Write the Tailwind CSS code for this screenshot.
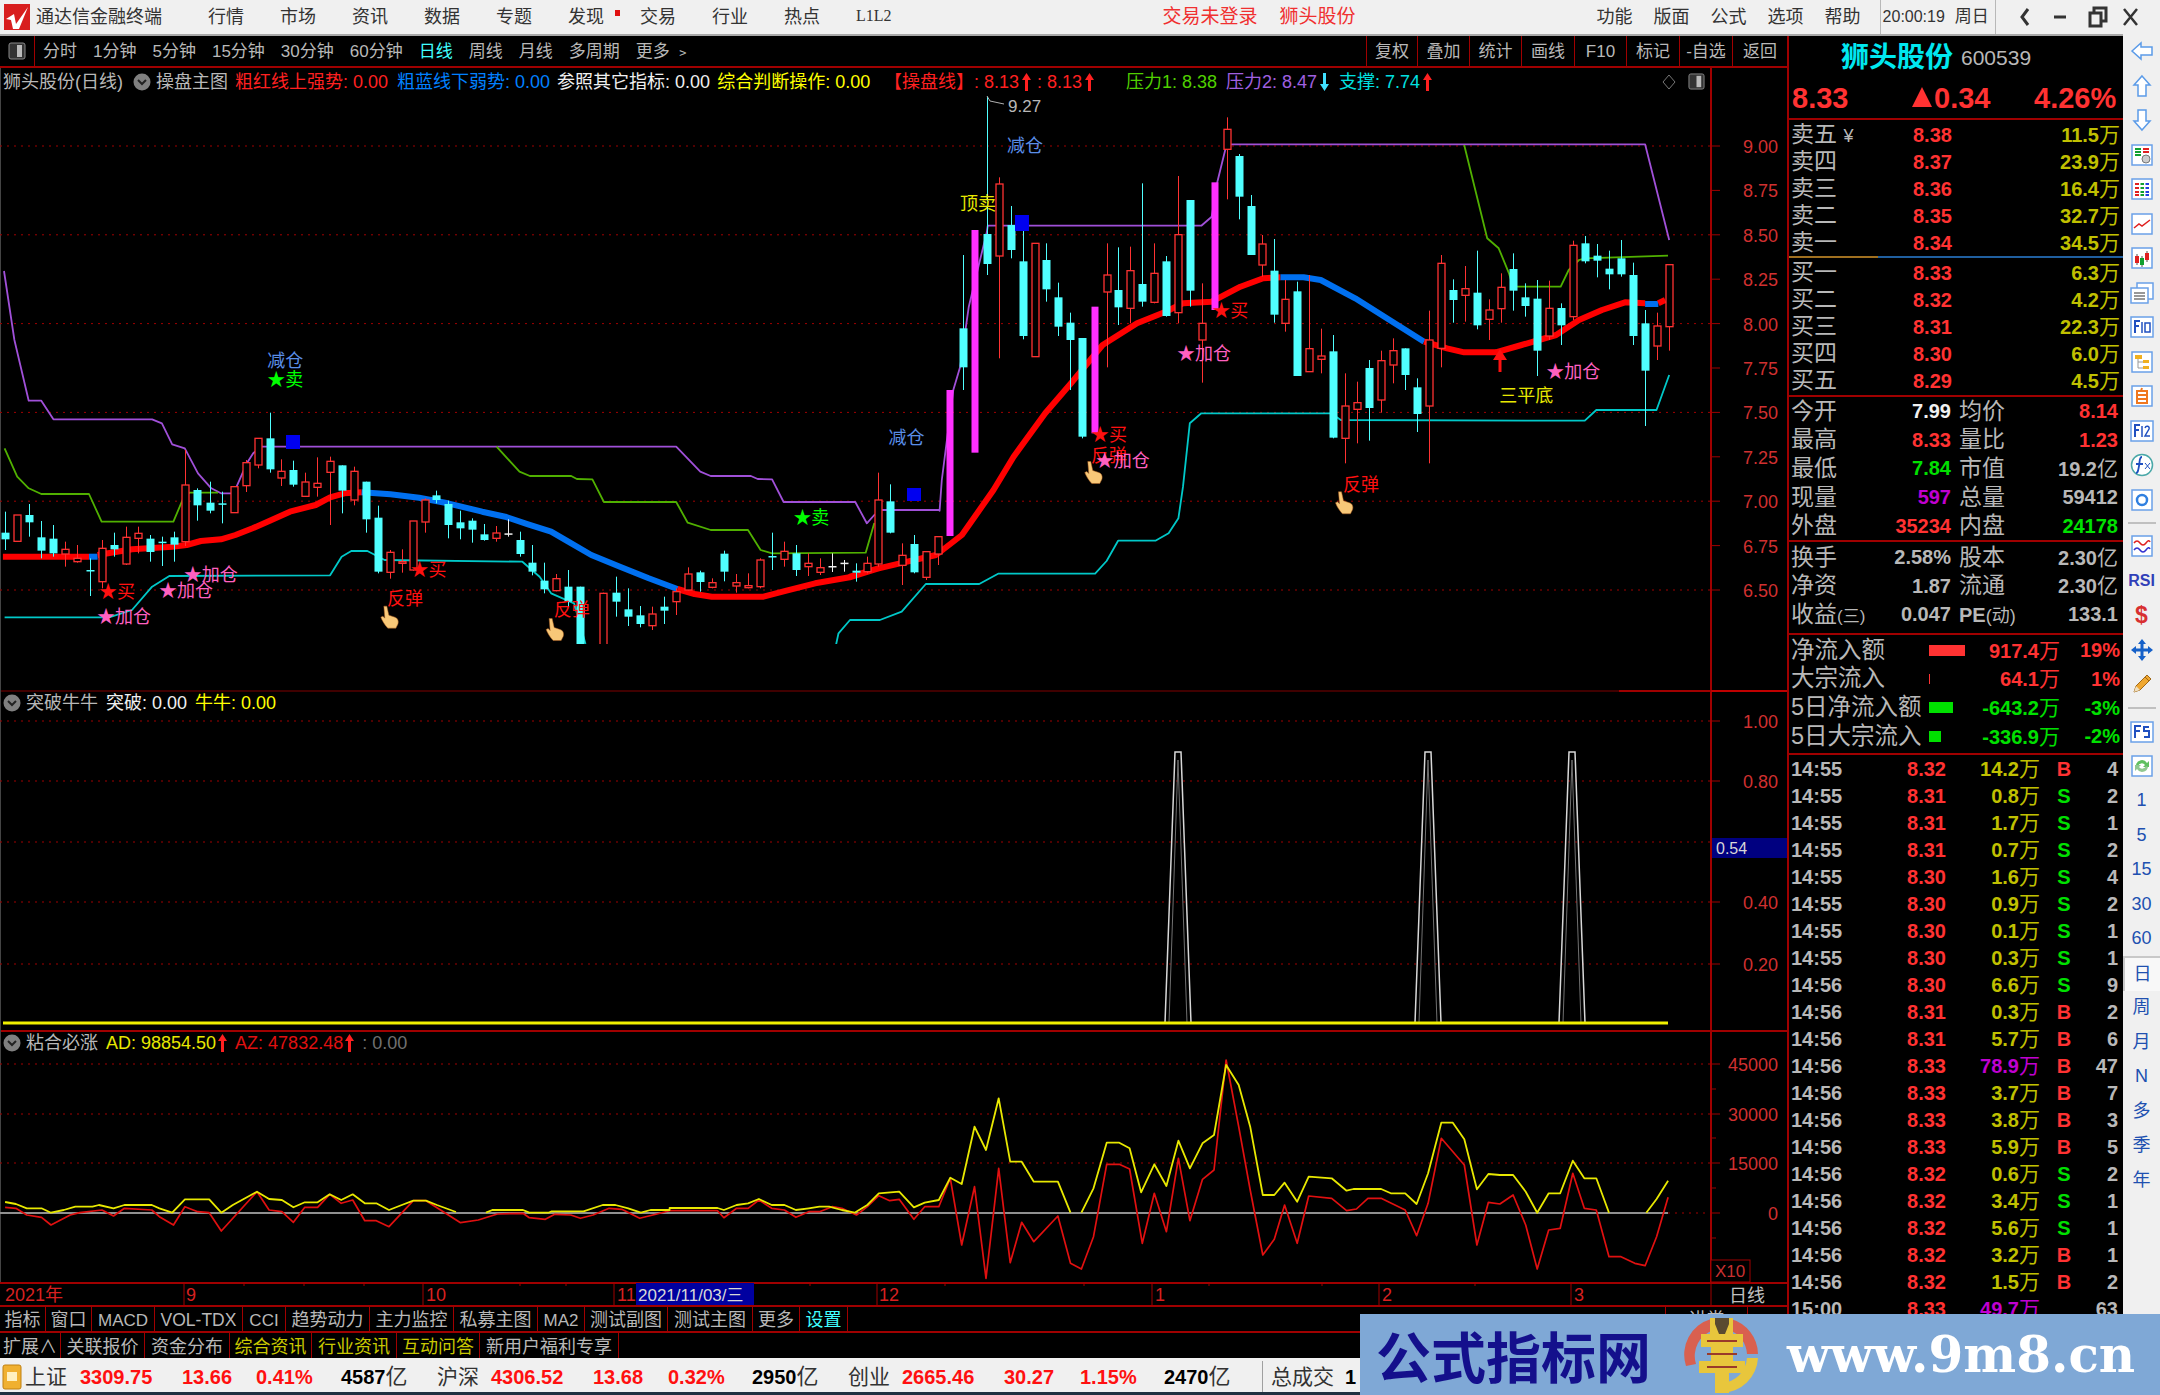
<!DOCTYPE html>
<html lang="zh">
<head>
  <meta charset="UTF-8" />
  <title>通达信金融终端</title>
  <script src="https://cdn.jsdelivr.net/npm/@tailwindcss/browser@4"></script>
</head>
<body class="relative w-[2160px] h-[1395px] overflow-hidden bg-black text-[#b8b8b8] font-['Liberation_Sans','Noto_Sans_CJK_SC',sans-serif]">

  <!-- Top menu -->
  <header class="flex items-center h-[36px] bg-[#f0f0f0] border-b-2 border-[#a8a8a8] text-[18px] text-[#333]">
    <svg class="ml-[4px] w-[26px] h-[26px]" viewBox="0 0 26 26"><rect width="26" height="26" fill="#d81e1e"/><path d="M2 15 L10 10 L12 20 L24 3 L15 25 L9 25 L7 16 Z" fill="#fff"/></svg>
    <span class="ml-[6px] w-[172px]">通达信金融终端</span>
    <nav class="flex gap-[36px]">
      <span>行情</span><span>市场</span><span>资讯</span><span>数据</span><span>专题</span>
      <span class="relative">发现<i class="absolute left-[47px] top-[6px] w-[5px] h-[6px] bg-[#e01010]"></i></span>
      <span>交易</span><span>行业</span><span>热点</span><span class="text-[16px] font-['Liberation_Serif',serif]">L1L2</span>
    </nav>
    <div class="ml-[271px] flex gap-[22px] text-[19px] text-[#f03030]"><span>交易未登录</span><span>狮头股份</span></div>
    <div class="ml-[241px] flex gap-[21px]"><span>功能</span><span>版面</span><span>公式</span><span>选项</span><span>帮助</span></div>
    <div class="ml-[19px] flex items-center h-full border-l border-r border-[#b8b8b8] pl-[2px] pr-[6px] gap-[10px]"><span class="text-[16px]">20:00:19</span><span class="text-[17px]">周日</span></div>
    <svg class="ml-[20px] w-[130px] h-[34px]" viewBox="0 0 130 34" fill="none" stroke="#333">
      <path d="M12 9 L6 17 L12 25" stroke-width="3"/>
      <path d="M38 17 H50" stroke-width="3"/>
      <path d="M74 13 H85 V26 H74 Z M78 13 V8 H90 V21 H85" stroke-width="3"/>
      <path d="M108 9 L121 25 M121 9 L108 25" stroke-width="2.5"/>
    </svg>
  </header>

  <main class="flex h-[1322px]">
    <!-- Chart column -->
    <section class="relative w-[1787px] flex flex-col shrink-0">
      <svg id="chart" class="absolute left-0 top-0" width="1787" height="1322" viewBox="0 36 1787 1322"></svg>

      <!-- Period toolbar -->
      <div class="relative z-10 flex items-center h-[32px] border-b-2 border-[#a00000] text-[17px]">
        <div class="flex items-center justify-center w-[35px] h-full border-r border-[#a00000]">
          <svg class="w-[18px] h-[18px]" viewBox="0 0 18 18"><rect x="1" y="1" width="16" height="16" rx="2" fill="#333" stroke="#888"/><rect x="9" y="3" width="5" height="12" fill="#bbb"/></svg>
        </div>
        <div class="ml-[8px] pt-[2px] flex gap-[16px]">
          <span>分时</span><span>1分钟</span><span>5分钟</span><span>15分钟</span><span>30分钟</span><span>60分钟</span>
          <span class="text-[#40ffff]">日线</span><span>周线</span><span>月线</span><span>多周期</span><span>更多 ﹥</span>
        </div>
        <div class="ml-auto flex h-full [&>span]:flex [&>span]:items-center [&>span]:justify-center [&>span]:border-l [&>span]:border-[#a00000] [&>span]:pt-[2px]">
          <span class="w-[51px]">复权</span><span class="w-[52px]">叠加</span><span class="w-[52px]">统计</span><span class="w-[53px]">画线</span><span class="w-[52px]">F10</span><span class="w-[53px]">标记</span><span class="w-[53px]">-自选</span><span class="w-[55px]">返回</span>
        </div>
      </div>

      <!-- Main chart legend -->
      <div class="relative z-10 h-[622px]">
        <div class="flex items-center h-[28px] pl-[3px] text-[18px] whitespace-nowrap">
          <span>狮头股份(日线)</span>
          <svg class="ml-[10px] w-[18px] h-[18px]" viewBox="0 0 18 18"><circle cx="9" cy="9" r="8.5" fill="#808080"/><path d="M5 7 L9 11 L13 7" fill="none" stroke="#222" stroke-width="2"/></svg>
          <span class="ml-[5px]">操盘主图</span>
          <span class="ml-[7px] text-[#ff2020]">粗红线上强势: 0.00</span>
          <span class="ml-[9px] text-[#0080ff]">粗蓝线下弱势: 0.00</span>
          <span class="ml-[7px] text-[#f0f0f0]">参照其它指标: 0.00</span>
          <span class="ml-[7px] text-[#ffff00]">综合判断操作: 0.00</span>
          <span class="absolute left-[884px] flex items-center text-[#ff2020]">【操盘线】: 8.13<svg class="ml-[3px] w-[9px] h-[18px] fill-[#ff2020]" viewBox="0 0 9 18"><path d="M4.500 0 L9 7 H6 V18 H3 V7 H0 Z"/></svg><span class="ml-[6px]">: 8.13</span><svg class="ml-[3px] w-[9px] h-[18px] fill-[#ff2020]" viewBox="0 0 9 18"><path d="M4.500 0 L9 7 H6 V18 H3 V7 H0 Z"/></svg></span>
          <span class="absolute left-[1126px] text-[#50d000]">压力1: 8.38</span>
          <span class="absolute left-[1226px] flex items-center text-[#a060e0]">压力2: 8.47<svg class="ml-[3px] w-[9px] h-[18px] fill-[#40e0ff]" viewBox="0 0 9 18"><path d="M4.500 18 L9 11 H6 V0 H3 V11 H0 Z"/></svg></span>
          <span class="absolute left-[1339px] flex items-center text-[#00e0e0]">支撑: 7.74<svg class="ml-[3px] w-[9px] h-[18px] fill-[#ff2020]" viewBox="0 0 9 18"><path d="M4.500 0 L9 7 H6 V18 H3 V7 H0 Z"/></svg></span>
          <svg class="absolute left-[1661px] top-[6px] w-[16px] h-[16px]" viewBox="0 0 16 16"><path d="M8 1 L14 8 L8 15 L2 8 Z" fill="none" stroke="#777"/></svg>
          <svg class="absolute left-[1688px] top-[5px] w-[17px] h-[17px]" viewBox="0 0 18 18"><rect x="1" y="1" width="16" height="16" rx="2" fill="#333" stroke="#888"/><rect x="9" y="3" width="5" height="12" fill="#bbb"/></svg>
        </div>
      </div>

      <!-- Sub panel 1 -->
      <div class="relative z-10 h-[340px]">
        <div class="flex items-center h-[26px] pl-[3px] text-[18px]">
          <svg class="w-[18px] h-[18px]" viewBox="0 0 18 18"><circle cx="9" cy="9" r="8.5" fill="#808080"/><path d="M5 7 L9 11 L13 7" fill="none" stroke="#222" stroke-width="2"/></svg>
          <span class="ml-[5px]">突破牛牛</span>
          <span class="ml-[8px] text-[#f0f0f0]">突破: 0.00</span>
          <span class="ml-[8px] text-[#ffff00]">牛牛: 0.00</span>
        </div>
      </div>

      <!-- Sub panel 2 -->
      <div class="relative z-10 h-[252px]">
        <div class="flex items-center h-[26px] pl-[3px] text-[18px]">
          <svg class="w-[18px] h-[18px]" viewBox="0 0 18 18"><circle cx="9" cy="9" r="8.5" fill="#808080"/><path d="M5 7 L9 11 L13 7" fill="none" stroke="#222" stroke-width="2"/></svg>
          <span class="ml-[5px]">粘合必涨</span>
          <span class="ml-[8px] flex items-center text-[#e8e800]">AD: 98854.50<svg class="ml-[2px] w-[9px] h-[18px] fill-[#ff2020]" viewBox="0 0 9 18"><path d="M4.500 0 L9 7 H6 V18 H3 V7 H0 Z"/></svg></span>
          <span class="ml-[8px] flex items-center text-[#e01010]">AZ: 47832.48<svg class="ml-[2px] w-[9px] h-[18px] fill-[#ff2020]" viewBox="0 0 9 18"><path d="M4.500 0 L9 7 H6 V18 H3 V7 H0 Z"/></svg></span>
          <span class="ml-[8px] text-[#707070]">: 0.00</span>
        </div>
      </div>

      <!-- Date axis (drawn in the svg) -->
      <div class="h-[23px] border-t-2 border-[#a00000]"></div>

      <!-- Tab rows -->
      <div class="relative z-10 flex h-[26px] border-t-2 border-[#a00000] text-[18px] [&>span]:flex [&>span]:items-center [&>span]:justify-center [&>span]:border-r [&>span]:border-[#a00000] [&>span]:pt-[3px]">
        <span class="w-[46px]">指标</span><span class="w-[46px]">窗口</span><span class="w-[63px] text-[17px]">MACD</span><span class="w-[88px] text-[17.5px]">VOL-TDX</span><span class="w-[43px] text-[17px]">CCI</span><span class="w-[84px]">趋势动力</span><span class="w-[84px]">主力监控</span><span class="w-[84px]">私募主图</span><span class="w-[47px] text-[17px]">MA2</span><span class="w-[83px]">测试副图</span><span class="w-[85px]">测试主图</span><span class="w-[47px]">更多</span><span class="w-[48px] text-[#40ffff]">设置</span>
        <span class="absolute left-[1665px] w-[83px] h-full border-l border-[#a00000]">讲堂</span>
      </div>
      <div class="relative z-10 flex h-[27px] border-t-2 border-[#a00000] text-[18px] [&>span]:flex [&>span]:items-center [&>span]:justify-center [&>span]:border-r [&>span]:border-[#a00000] [&>span]:pt-[3px]">
        <span class="w-[61px]">扩展∧</span><span class="w-[84px]">关联报价</span><span class="w-[85px]">资金分布</span><span class="w-[82px] text-[#c8c800]">综合资讯</span><span class="w-[85px] text-[#c8c800]">行业资讯</span><span class="w-[83px] text-[#c8c800]">互动问答</span><span class="w-[139px]">新用户福利专享</span>
      </div>
    </section>

    <!-- Quote panel -->
    <aside class="w-[336px] shrink-0 border-l-2 border-[#a00000] overflow-hidden">
      <div class="flex items-center h-[42px] pt-[2px] pl-[52px]">
        <span class="text-[28px] font-bold text-[#00e8f0]">狮头股份</span>
        <span class="ml-[8px] text-[21px]">600539</span>
      </div>
      <div class="relative flex items-center h-[42px] pt-[1px] border-b-2 border-[#a00000] text-[29px] font-bold text-[#ff3232]">
        <span class="ml-[3px]">8.33</span>
        <span class="absolute left-[123px] top-[9px] w-0 h-0 border-x-[10px] border-x-transparent border-b-[20px] border-b-[#ff3232]"></span>
        <span class="absolute left-[145px]">0.34</span>
        <span class="absolute left-[245px]">4.26%</span>
      </div>

      <div class="h-[136px] pt-[1px] leading-none text-[20px] font-bold [&>div]:grid [&>div]:grid-cols-[122px_40px_167px] [&>div]:h-[27px] [&>div]:items-center [&>div]:pl-[2px]">
        <div><span class="text-[23px] font-normal">卖五 <span class="text-[18px]">¥</span></span><span class="text-[#ff3232]">8.38</span><span class="text-right text-[#c0c000]">11.5<span class="font-normal text-[21px]">万</span></span></div>
        <div><span class="text-[23px] font-normal">卖四</span><span class="text-[#ff3232]">8.37</span><span class="text-right text-[#c0c000]">23.9<span class="font-normal text-[21px]">万</span></span></div>
        <div><span class="text-[23px] font-normal">卖三</span><span class="text-[#ff3232]">8.36</span><span class="text-right text-[#c0c000]">16.4<span class="font-normal text-[21px]">万</span></span></div>
        <div><span class="text-[23px] font-normal">卖二</span><span class="text-[#ff3232]">8.35</span><span class="text-right text-[#c0c000]">32.7<span class="font-normal text-[21px]">万</span></span></div>
        <div><span class="text-[23px] font-normal">卖一</span><span class="text-[#ff3232]">8.34</span><span class="text-right text-[#c0c000]">34.5<span class="font-normal text-[21px]">万</span></span></div>
      </div>
      <div class="flex h-[2px]"><i class="w-[89px] bg-[#a07020]"></i><i class="flex-1 bg-[#205f9f]"></i></div>
      <div class="h-[139px] pt-[1px] leading-none border-b-2 border-[#a00000] text-[20px] font-bold [&>div]:grid [&>div]:grid-cols-[122px_40px_167px] [&>div]:h-[27px] [&>div]:items-center [&>div]:pl-[2px]">
        <div><span class="text-[23px] font-normal">买一</span><span class="text-[#ff3232]">8.33</span><span class="text-right text-[#c0c000]">6.3<span class="font-normal text-[21px]">万</span></span></div>
        <div><span class="text-[23px] font-normal">买二</span><span class="text-[#ff3232]">8.32</span><span class="text-right text-[#c0c000]">4.2<span class="font-normal text-[21px]">万</span></span></div>
        <div><span class="text-[23px] font-normal">买三</span><span class="text-[#ff3232]">8.31</span><span class="text-right text-[#c0c000]">22.3<span class="font-normal text-[21px]">万</span></span></div>
        <div><span class="text-[23px] font-normal">买四</span><span class="text-[#ff3232]">8.30</span><span class="text-right text-[#c0c000]">6.0<span class="font-normal text-[21px]">万</span></span></div>
        <div><span class="text-[23px] font-normal">买五</span><span class="text-[#ff3232]">8.29</span><span class="text-right text-[#c0c000]">4.5<span class="font-normal text-[21px]">万</span></span></div>
      </div>

      <!-- Stats -->
      <div class="h-[145px] leading-none border-b-2 border-[#a00000] text-[20px] font-bold [&>div]:grid [&>div]:grid-cols-[162px_167px] [&>div]:h-[28.6px] [&>div]:items-center [&_p]:flex [&_p]:justify-between [&_p]:items-center [&_em]:text-[23px] [&_em]:font-normal [&_em]:not-italic">
        <div><p class="pl-[2px]"><em>今开</em><span class="text-[#f0f0f0]">7.99</span></p><p class="pl-[8px]"><em>均价</em><span class="text-[#ff3232]">8.14</span></p></div>
        <div><p class="pl-[2px]"><em>最高</em><span class="text-[#ff3232]">8.33</span></p><p class="pl-[8px]"><em>量比</em><span class="text-[#ff3232]">1.23</span></p></div>
        <div><p class="pl-[2px]"><em>最低</em><span class="text-[#00e000]">7.84</span></p><p class="pl-[8px]"><em>市值</em><span>19.2<span class="font-normal text-[21px]">亿</span></span></p></div>
        <div><p class="pl-[2px]"><em>现量</em><span class="text-[#c000d0]">597</span></p><p class="pl-[8px]"><em>总量</em><span>59412</span></p></div>
        <div><p class="pl-[2px]"><em>外盘</em><span class="text-[#ff3232]">35234</span></p><p class="pl-[8px]"><em>内盘</em><span class="text-[#00e000]">24178</span></p></div>
      </div>
      <div class="h-[93px] pt-[1px] leading-none border-b-2 border-[#a00000] text-[20px] font-bold [&>div]:grid [&>div]:grid-cols-[162px_167px] [&>div]:h-[28.6px] [&>div]:items-center [&_p]:flex [&_p]:justify-between [&_p]:items-center [&_em]:text-[23px] [&_em]:font-normal [&_em]:not-italic">
        <div><p class="pl-[2px]"><em>换手</em><span>2.58%</span></p><p class="pl-[8px]"><em>股本</em><span>2.30<span class="font-normal text-[21px]">亿</span></span></p></div>
        <div><p class="pl-[2px]"><em>净资</em><span>1.87</span></p><p class="pl-[8px]"><em>流通</em><span>2.30<span class="font-normal text-[21px]">亿</span></span></p></div>
        <div><p class="pl-[2px]"><em>收益<span class="text-[17px]">(三)</span></em><span>0.047</span></p><p class="pl-[8px]"><em class="font-bold"><b class="text-[20px]">PE</b><span class="text-[18px]">(动)</span></em><span>133.1</span></p></div>
      </div>

      <!-- Money flow -->
      <div class="h-[120px] pt-[1px] border-b-2 border-[#a00000] text-[20px] font-bold [&>div]:flex [&>div]:items-center [&>div]:h-[28.7px] [&>div]:pl-[2px] [&_em]:not-italic [&_em]:font-normal [&_em]:text-[23.5px] [&_em]:w-[138px]">
        <div class="text-[#ff3232]"><em class="text-[#b8b8b8]">净流入额</em><i class="w-[36px] h-[11px] bg-[#ff3232]"></i><span class="ml-auto">917.4<span class="font-normal text-[21px]">万</span></span><span class="w-[63px] pr-[3px] text-right">19%</span></div>
        <div class="text-[#ff3232]"><em class="text-[#b8b8b8]">大宗流入</em><i class="w-[1px] h-[10px] bg-[#ff3232]"></i><span class="ml-auto">64.1<span class="font-normal text-[21px]">万</span></span><span class="w-[63px] pr-[3px] text-right">1%</span></div>
        <div class="text-[#00e000]"><em class="text-[#b8b8b8]">5日净流入额</em><i class="w-[24px] h-[11px] bg-[#00e000]"></i><span class="ml-auto">-643.2<span class="font-normal text-[21px]">万</span></span><span class="w-[63px] pr-[3px] text-right">-3%</span></div>
        <div class="text-[#00e000]"><em class="text-[#b8b8b8]">5日大宗流入</em><i class="w-[12px] h-[11px] bg-[#00e000]"></i><span class="ml-auto">-336.9<span class="font-normal text-[21px]">万</span></span><span class="w-[63px] pr-[3px] text-right">-2%</span></div>
      </div>

      <!-- Ticks -->
      <div id="ticks" class="leading-none text-[20px] font-bold"></div>
    </aside>

    <!-- Tool strip -->
    <div class="w-[37px] shrink-0 -mt-[2px] bg-[#f0f0f0] text-[#2050b0] text-[18px] flex flex-col items-center [&>div]:h-[34.5px] [&>div]:w-full [&>div]:flex [&>div]:items-center [&>div]:justify-center [&_svg]:w-[24px] [&_svg]:h-[24px]">
      <div><svg viewBox="0 0 24 24"><path d="M2 12 L11 4 V8 H22 V16 H11 V20 Z" fill="#fff" stroke="#5b9be8" stroke-width="1.5"/></svg></div>
      <div><svg viewBox="0 0 24 24"><path d="M12 2 L20 11 H16 V22 H8 V11 H4 Z" fill="#fff" stroke="#5b9be8" stroke-width="1.5"/></svg></div>
      <div><svg viewBox="0 0 24 24"><path d="M12 22 L20 13 H16 V2 H8 V13 H4 Z" fill="#fff" stroke="#5b9be8" stroke-width="1.5"/></svg></div>
      <div><svg viewBox="0 0 24 24"><rect x="2" y="2" width="20" height="20" fill="#fff" stroke="#6aa0e8" stroke-width="1.5"/><path d="M5 6 H11 M5 9 H11 M5 12 H11" stroke="#10a030" stroke-width="2"/><path d="M13 6 H19 M13 9 H19" stroke="#e02020" stroke-width="2"/><circle cx="16" cy="16" r="4" fill="#ccc" stroke="#777"/></svg></div>
      <div><svg viewBox="0 0 24 24"><rect x="2" y="2" width="20" height="20" fill="#fff" stroke="#6aa0e8" stroke-width="1.5"/><path d="M5 7 H9 M5 11 H9 M5 15 H9 M5 18 H9" stroke="#e02020" stroke-width="2"/><path d="M10.500 7 H14 M10.500 11 H14 M10.500 15 H14 M10.500 18 H14" stroke="#10a030" stroke-width="2"/><path d="M15.500 7 H19 M15.500 11 H19 M15.500 15 H19 M15.500 18 H19" stroke="#2040e0" stroke-width="2"/></svg></div>
      <div><svg viewBox="0 0 24 24"><rect x="2" y="2" width="20" height="20" fill="#fff" stroke="#6aa0e8" stroke-width="1.5"/><path d="M4 16 L9 12 L12 14 L20 8" fill="none" stroke="#e02020" stroke-width="1.500"/></svg></div>
      <div><svg viewBox="0 0 24 24"><rect x="2" y="2" width="20" height="20" fill="#fff" stroke="#6aa0e8" stroke-width="1.5"/><path d="M7 8 V19 M12 10 V21 M17 5 V16" stroke="#555"/><rect x="5" y="10" width="4" height="7" fill="#e02020"/><rect x="10" y="12" width="4" height="7" fill="#10a030"/><rect x="15" y="7" width="4" height="7" fill="#e02020"/></svg></div>
      <div><svg viewBox="0 0 24 24"><rect x="7" y="2" width="16" height="16" fill="#fff" stroke="#6aa0e8" stroke-width="1.5"/><rect x="1" y="7" width="17" height="15" fill="#fff" stroke="#6aa0e8" stroke-width="1.5"/><path d="M4 12 H15 M4 15 H15 M4 18 H15" stroke="#777" stroke-width="1.500"/></svg></div>
      <div><svg viewBox="0 0 24 24"><rect x="1" y="2" width="22" height="20" fill="#fff" stroke="#6aa0e8" stroke-width="1.5"/><path d="M5 18 V6 H10 M5 11 H9" fill="none" stroke="#2050c0" stroke-width="2"/><path d="M12 7 V18" stroke="#2050c0" stroke-width="1.500"/><rect x="15" y="8" width="5" height="9" fill="none" stroke="#2050c0" stroke-width="1.500"/></svg></div>
      <div><svg viewBox="0 0 24 24"><rect x="2" y="2" width="20" height="20" fill="#fff" stroke="#6aa0e8" stroke-width="1.5"/><path d="M8 8 V18 H14 M8 12 H14" fill="none" stroke="#999"/><rect x="5" y="5" width="7" height="4" fill="#f0b020"/><rect x="13" y="10" width="6" height="3" fill="#f0b020"/><rect x="13" y="16" width="6" height="3" fill="#f0b020"/></svg></div>
      <div><svg viewBox="0 0 24 24"><rect x="2" y="2" width="20" height="20" fill="#fff" stroke="#6aa0e8" stroke-width="1.5"/><path d="M7 7 H17 V19 H7 Z M7 11 H17 M7 15 H17 M12 4 L11 7" fill="none" stroke="#f07820" stroke-width="2"/></svg></div>
      <div><svg viewBox="0 0 24 24"><rect x="1" y="2" width="22" height="20" fill="#fff" stroke="#6aa0e8" stroke-width="1.5"/><path d="M5 18 V6 H10 M5 11 H9" fill="none" stroke="#2050c0" stroke-width="2"/><path d="M12 7 V18" stroke="#2050c0" stroke-width="1.500"/><path d="M15 9 C16 6 20 7 19 10 L15 17 H20" fill="none" stroke="#2050c0" stroke-width="1.500"/></svg></div>
      <div><svg viewBox="0 0 24 24"><circle cx="12" cy="12" r="10.500" fill="#fff" stroke="#4aa8a8" stroke-width="1.5"/><path d="M12 4 C9 4 10 8 9 13 C8 18 8 20 6 20 M6 11 H13" fill="none" stroke="#2050c0" stroke-width="1.800"/><path d="M15 10 L20 16 M20 10 L15 16" stroke="#2050c0"/></svg></div>
      <div><svg viewBox="0 0 24 24"><rect x="2" y="2" width="20" height="20" fill="#fff" stroke="#6aa0e8" stroke-width="1.5"/><circle cx="12" cy="12" r="5" fill="none" stroke="#3080e0" stroke-width="2.500"/></svg></div>
      <hr class="w-[28px] border-t-2 border-[#c0c0c0] mt-[5px] mb-[5px] shrink-0" />
      <div><svg viewBox="0 0 24 24"><rect x="2" y="2" width="20" height="20" fill="#fff" stroke="#6aa0e8" stroke-width="1.5"/><path d="M4 9 Q7 5 10 9 T16 9 T20 8" fill="none" stroke="#e02020" stroke-width="1.500"/><path d="M4 16 Q7 12 10 16 T16 16 T20 15" fill="none" stroke="#3030d0" stroke-width="1.500"/></svg></div>
      <div class="text-[16px] font-bold text-[#3040b8]">RSI</div>
      <div class="text-[23px] font-bold text-[#d83030]">$</div>
      <div><svg viewBox="0 0 24 24" fill="#1560c8"><path d="M12 1 L16 6 H8 Z M12 23 L16 18 H8 Z M1 12 L6 8 V16 Z M23 12 L18 8 V16 Z"/><rect x="5" y="10.500" width="14" height="3"/><rect x="10.500" y="5" width="3" height="14"/></svg></div>
      <div><svg viewBox="0 0 24 24"><path d="M4 20 L6 14 L17 3 L21 7 L10 18 Z" fill="#f0a830" stroke="#a06818"/><path d="M4 20 L6 14 L10 18 Z" fill="#f0e0c0"/><path d="M15 5 L19 9" stroke="#a06818"/></svg></div>
      <hr class="w-[28px] border-t-2 border-[#c0c0c0] mt-[5px] mb-[6px] shrink-0" />
      <div><svg viewBox="0 0 24 24"><rect x="1" y="2" width="22" height="20" fill="#fff" stroke="#6aa0e8" stroke-width="1.5"/><path d="M5 18 V6 H11 M5 11 H10" fill="none" stroke="#2050c0" stroke-width="2"/><path d="M19 7 H14 V11 H19 V17 H14" fill="none" stroke="#2050c0" stroke-width="2"/></svg></div>
      <div><svg viewBox="0 0 24 24"><rect x="2" y="2" width="20" height="20" fill="#fff" stroke="#6aa0e8" stroke-width="1.5"/><path d="M6 11 A6 6 0 0 1 17 9 L19 7 V13 H13 L15 11 A4 4 0 0 0 8 12 Z" fill="#60c060"/><path d="M18 13 A6 6 0 0 1 7 15 L5 17 V11 H11 L9 13 A4 4 0 0 0 16 12 Z" fill="#90c890"/></svg></div>
      <div>1</div><div>5</div><div>15</div><div>30</div><div>60</div>
      <div class="bg-[#f8f8f8] border-t-2 border-l-2 border-[#c8c8c8]">日</div>
      <div>周</div><div>月</div><div>N</div><div>多</div><div>季</div><div>年</div>
    </div>
  </main>

  <!-- Index status bar -->
  <footer class="flex items-center h-[34px] pt-[3px] bg-[#f0f0f0] text-[20px] text-[#ff1010] font-bold whitespace-nowrap">
    <svg class="ml-[2px] w-[20px] h-[26px] shrink-0" viewBox="0 0 20 26"><rect x="1" y="1" width="18" height="24" rx="2" fill="#f0b030" stroke="#c08010"/><rect x="5" y="8" width="10" height="9" fill="#fff0c0"/></svg>
    <span class="ml-[3px] text-[21px] font-normal text-[#333] w-[55px]">上证</span>
    <span class="w-[102px]">3309.75</span><span class="w-[74px]">13.66</span><span class="w-[85px]">0.41%</span>
    <span class="text-black w-[96px]">4587<span class="font-normal text-[22px] text-[#333]">亿</span></span>
    <span class="text-[21px] font-normal text-[#333] w-[54px]">沪深</span>
    <span class="w-[102px]">4306.52</span><span class="w-[75px]">13.68</span><span class="w-[84px]">0.32%</span>
    <span class="text-black w-[96px]">2950<span class="font-normal text-[22px] text-[#333]">亿</span></span>
    <span class="text-[21px] font-normal text-[#333] w-[54px]">创业</span>
    <span class="w-[102px]">2665.46</span><span class="w-[76px]">30.27</span><span class="w-[84px]">1.15%</span>
    <span class="text-black w-[98px]">2470<span class="font-normal text-[22px] text-[#333]">亿</span></span>
    <span class="border-l border-[#a0a0a0] pl-[8px] text-[21px] font-normal text-[#333]">总成交</span><span class="ml-[11px] text-black">1</span>
  </footer>
  <div class="h-[3px] bg-[#203040]"></div>

  <!-- Watermark banner over the corner -->
  <div class="absolute z-20 left-[1360px] top-[1314px] flex items-center w-[800px] h-[81px] bg-[#7fa8d6]">
    <span class="ml-[16px] w-[305px] text-[55px] leading-none font-bold text-[#14108c] font-['Noto_Sans_CJK_SC',sans-serif]">公式指标网</span>
    <svg class="w-[82px] h-[81px]" viewBox="0 0 82 81">
      <path d="M5 52 A37 37 0 0 1 30 5 L33 16 A27 27 0 0 0 15 50 Z" fill="#d9604f"/>
      <path d="M50 5 A37 37 0 0 1 77 40 L66 40 A27 27 0 0 0 48 16 Z" fill="#d9604f"/>
      <path d="M77 44 A37 37 0 0 1 41 79 L41 69 A27 27 0 0 0 66 44 Z" fill="#e8c63c"/>
      <path d="M29 4 H52 V20 H62 V33 H52 V47 H64 V59 H48 V79 H34 V59 H18 V47 H30 V33 H20 V20 H29 Z" fill="#e8c63c"/>
      <path d="M34 10 L38 20 H44 L48 10 V4 H34 Z" fill="#5a4a30"/>
      <path d="M26 27 H56 M26 40 H56 M26 53 H56" stroke="#9a3a2a" stroke-width="2"/>
    </svg>
    <span class="ml-[24px] text-[50px] leading-none font-bold text-white font-['DejaVu_Serif',serif]">www.9m8.cn</span>
  </div>

  <script>
    // trade list
    const ticks = [
      ["14:55","8.32","14.2","B","4"],["14:55","8.31","0.8","S","2"],["14:55","8.31","1.7","S","1"],
      ["14:55","8.31","0.7","S","2"],["14:55","8.30","1.6","S","4"],["14:55","8.30","0.9","S","2"],
      ["14:55","8.30","0.1","S","1"],["14:55","8.30","0.3","S","1"],["14:56","8.30","6.6","S","9"],
      ["14:56","8.31","0.3","B","2"],["14:56","8.31","5.7","B","6"],["14:56","8.33","78.9","B","47"],
      ["14:56","8.33","3.7","B","7"],["14:56","8.33","3.8","B","3"],["14:56","8.33","5.9","B","5"],
      ["14:56","8.32","0.6","S","2"],["14:56","8.32","3.4","S","1"],["14:56","8.32","5.6","S","1"],
      ["14:56","8.32","3.2","B","1"],["14:56","8.32","1.5","B","2"],["15:00","8.33","49.7","","63"]
    ];
    document.getElementById("ticks").innerHTML = ticks.map(t => {
      const vol = parseFloat(t[2]) > 40 ? "text-[#c000d0]" : "text-[#c0c000]";
      const bs = t[3] === "B" ? "text-[#ff3232]" : "text-[#00e000]";
      return `<div class="grid grid-cols-[60px_97px_94px_48px_30px] h-[27px] items-center">
        <span class="pl-[2px]">${t[0]}</span>
        <span class="text-right text-[#ff3232]">${t[1]}</span>
        <span class="text-right ${vol}">${t[2]}<span class="font-normal text-[21px]">万</span></span>
        <span class="text-center ${bs}">${t[3]}</span>
        <span class="text-right">${t[4]}</span>
      </div>`;
    }).join("");

    // chart: coordinates below were read off crops, mapped back to page pixels
    const z8 = (x, y) => [x / 1.742, 340 + y / 3];
    const z9 = (x, y) => [850 + x / 1.742, 90 + y / 3];
    const z12 = (x, y) => [850 + x / 1.742, 400 + y / 3];
    const z10 = (x, y) => [x / 1.568, 1030 + y / 3];
    const z11 = (x, y) => [900 + x / 1.742, 1030 + y / 3];
    const pts = (f, a) => { const o = []; for (let i = 0; i < a.length; i += 2) o.push(f(a[i], a[i + 1])); return o; };
    const d = list => "M" + list.map(p => p[0].toFixed(1) + " " + p[1].toFixed(1)).join("L");

    let out = "";
    const line = (list, color, w) => { out += `<path d="${d(list)}" fill="none" stroke="${color}" stroke-width="${w}" stroke-linejoin="round"/>`; };
    const grid = y => { out += `<line x1="0" x2="1711" y1="${y}" y2="${y}" stroke="#a00000" stroke-dasharray="2 5"/>`; };
    const label = (y, t) => { out += `<line x1="1711" x2="1720" y1="${y}" y2="${y}" stroke="#a00000"/><text x="1778" y="${y + 7}" text-anchor="end" font-size="18" fill="#d03030">${t}</text>`; };
    const tick = (y) => { out += `<line x1="1711" x2="1716" y1="${y}" y2="${y}" stroke="#a00000"/>`; };

    // panel frames
    out += `<line x1="1711" x2="1711" y1="68" y2="1282" stroke="#a00000" stroke-width="2"/>`;
    out += `<line x1="0" x2="1619" y1="691" y2="691" stroke="#400000" stroke-width="2"/>`;
    out += `<line x1="1619" x2="1711" y1="691" y2="691" stroke="#a00000" stroke-width="2"/><line x1="1711" x2="1787" y1="691" y2="691" stroke="#c00000" stroke-width="2"/>`;
    out += `<line x1="0" x2="1787" y1="1031" y2="1031" stroke="#a00000" stroke-width="2"/>`;
    out += `<line x1="0.500" x2="0.500" y1="68" y2="1282" stroke="#444"/>`;

    // price panel
    [146, 234.8, 323.6, 412.4, 501.2, 590].forEach(grid);
    ["9.00","8.75","8.50","8.25","8.00","7.75","7.50","7.25","7.00","6.75","6.50"].forEach((t, i) => label(146 + i * 44.4, t));

    out += `<g clip-path="url(#main)">`;
    // purple
    line([[4,271]].concat(pts(z8,[25,0,50,182,72,182,93,238,265,238,282,250,300,313,322,325,345,400,368,445,385,460,407,460,430,370,441,340,455,320,1178,320,1220,395,1238,408,1308,408,1320,417,1345,418,1365,486,1490,486,1510,550,1523,525,1536,510,1636,510])).concat(pts(z9,[156,1262,160,1170,180,900,192,830,207,650,225,520,238,430,240,407,612,407,630,380,640,275,655,170,660,163,1385,163,1427,450])), "#a050d8", 1.8);
    // green
    line(pts(z8,[8,325,30,410,50,445,72,462,155,462,177,545,302,545,318,480,330,458,380,458]), "#50b000", 1.8);
    line(pts(z8,[865,320,905,395,923,408,995,408,1005,417,1032,418,1052,486,1178,486,1198,548,1238,570,1303,570,1325,630,1345,640,1508,638,1523,549]), "#50b000", 1.8);
    line(pts(z9,[1070,165,1110,445,1130,475,1148,550,1155,590,1238,590,1252,540,1270,510,1280,505,1425,497]), "#50b000", 1.8);
    // cyan
    line(pts(z8,[8,832,190,832,230,810,265,740,295,708,575,706,595,650,612,633,640,633,670,660,910,665,940,710,960,760,1000,790,1010,850,1020,912]), "#00c8c8", 1.8);
    line(pts(z12,[-45,900,-20,700,0,660,52,660,90,635,132,552,225,552,258,521,427,521,447,483,467,422,532,422,555,400,572,355,580,260,592,70,612,40,838,40,855,60,1280,62,1300,30,1405,30,1427,-75]), "#00c8c8", 1.8);

    // thick moving average
    const ma1 = pts(z8,[5,650,155,650]);
    const ma2 = pts(z8,[155,650,170,650]);
    const ma3 = pts(z8,[170,645,230,628,300,620,325,615,350,603,385,598,410,585,440,565,470,542,505,515,550,495,575,472,600,460,630,457]);
    const ma4 = pts(z8,[630,457,680,463,730,473,780,490,840,515,880,530,920,553,960,575,990,605,1030,645,1080,680,1130,715,1180,747]);
    const ma5 = pts(z8,[1180,747,1210,762,1240,770,1330,770,1370,752,1420,730,1480,712,1530,685]).concat(pts(z12,[0,530,50,505,100,485,150,465,195,405])).concat(pts(z9,[250,1200,285,1100,340,970,385,880,440,765,500,700,550,665,580,640,630,635,680,590,720,565,750,562]));
    const ma6 = pts(z9,[750,562,790,562,820,570,880,625,940,690,1000,755]);
    const ma7 = pts(z9,[1000,755,1040,775,1070,787,1125,787,1170,765,1230,735,1270,690,1310,660,1350,637,1385,640]);
    const ma8 = pts(z9,[1385,642,1408,642]);
    const ma9 = pts(z9,[1408,640,1420,630]);
    line(ma1,"#ff0000",6); line(ma2,"#0070f0",6); line(ma3,"#ff0000",6); line(ma4,"#0070f0",6); line(ma5,"#ff0000",6);
    line(ma6,"#0070f0",6); line(ma7,"#ff0000",6); line(ma8,"#0070f0",6); line(ma9,"#ff0000",6);

    // candles: type, x, high, top, bottom, low
    const c8 = "c 9 515 578 598 630|r 30 525 525 604 604|c 51 492 525 547 590|c 72 543 592 632 655|c 93 555 596 640 650|r 114 605 628 642 680|r 135 615 655 665 668|c 156 655 690 693 768|r 177 600 625 725 745|c 198 578 615 628 650|r 219 560 592 672 675|r 240 560 580 595 640|c 261 585 596 636 665|c 282 590 605 608 678|c 303 575 592 614 665|r 323 330 435 605 618|c 344 445 450 496 542|c 365 425 488 512 520|c 386 455 490 494 550|r 407 440 440 518 518|r 428 360 368 437 456|r 449 295 295 375 385|c 470 218 295 388 398|r 490 358 394 414 438|c 511 362 390 434 440|r 532 398 426 469 470|r 553 352 430 442 470|r 574 350 364 397 555|c 595 376 376 452 520|r 616 380 394 480 496|c 637 425 425 538 578|c 658 497 533 695 700|r 679 630 637 697 716|r 700 628 665 670 698|r 720 543 543 690 692|r 741 475 480 546 578|c 760 452 466 480 490|c 780 482 492 555 595|c 801 512 547 565 598|c 822 535 542 569 608|c 843 552 583 600 602|r 864 558 579 595 605|w 885 538 580 582 590|c 905 575 600 642 650|c 926 615 668 695 706|c 947 668 722 748 760|r 968 702 716 752 754|c 989 690 740 785 800|c 1010 740 740 930 930|r 1051 758 760 930 930|c 1073 710 758 785 830|c 1094 745 808 830 858|c 1115 798 826 852 862|r 1136 800 822 857 870|c 1157 770 800 812 852|r 1178 745 755 785 825|r 1198 682 702 750 752|c 1219 692 697 726 755|r 1240 715 728 742 745|c 1261 632 641 695 724|r 1282 702 728 738 758|r 1303 700 737 743 745|r 1324 655 660 740 745|c 1345 578 648 652 690|r 1366 605 634 658 680|c 1387 615 640 690 708|r 1408 640 670 680 708|r 1428 655 683 697 705|w 1449 640 678 680 696|w 1470 660 668 670 695|c 1491 670 692 698 725|r 1510 650 670 695 700|r 1530 398 480 672 680|c 1551 433 484 578 580";
    const c9 = "r 91 1360 1396 1426 1485|c 112 1335 1362 1447 1450|r 133 1385 1385 1462 1470|r 154 1340 1340 1392 1425|m 175 900 900 1338 1338|c 196 495 715 832 900|m 217 420 420 1088 1088|c 238 20 432 522 555|r 259 262 282 498 805|c 280 348 405 480 505|c 301 400 514 738 748|r 322 460 460 800 800|c 342 460 510 598 635|c 363 578 622 710 738|c 384 668 698 750 900|c 405 744 744 1040 1045|m 426 650 650 1030 1030|r 447 460 555 606 832|c 467 472 600 652 705|r 488 470 542 655 700|c 509 280 582 635 650|r 530 460 550 637 640|c 551 498 514 678 680|r 572 258 434 668 700|c 593 330 330 602 650|r 614 580 700 750 878|m 635 277 277 660 660|r 656 82 118 178 328|c 677 192 198 320 388|c 698 315 348 495 495|r 718 435 462 525 560|c 739 447 542 674 698|r 758 570 628 700 725|c 779 575 604 858 858|r 800 555 776 845 845|r 821 716 798 808 850|c 842 735 784 1043 1045|r 862 850 948 1045 1120|r 883 875 938 958 1060|c 904 810 834 954 1052|r 925 782 812 930 968|r 946 745 782 825 880|c 967 775 775 855 900|c 988 865 892 972 1026|r 1008 662 750 948 1120|r 1029 495 520 775 832|c 1050 568 600 630 698|r 1071 528 596 616 695|c 1092 482 608 706 718|r 1113 628 660 688 750|r 1134 550 592 656 698|c 1155 490 537 602 662|c 1176 580 622 648 680|c 1197 570 626 782 858|r 1217 572 655 738 750|c 1238 640 654 706 765|r 1259 452 466 680 690|c 1280 438 460 514 520|c 1301 462 497 512 562|c 1322 482 536 553 598|c 1343 450 505 553 560|c 1364 518 555 738 765|c 1385 660 700 842 1008|r 1406 668 708 768 810|r 1427 522 524 710 782";
    const candle = (f, row) => {
      const [k, x, hi, top, bot, lo] = row.split(" ").map((v, i) => i ? +v : v);
      const [px, yHi] = f(x, hi), yTop = f(x, top)[1], yBot = f(x, bot)[1], yLo = f(x, lo)[1];
      const X = Math.round(px);
      if (k === "m") { out += `<rect x="${X - 3.500}" y="${yTop}" width="7" height="${yBot - yTop}" fill="#ff30ff"/>`; return; }
      const col = k === "r" ? "#ff3232" : k === "w" ? "#f0f0f0" : "#50ffff";
      out += `<line x1="${X + 0.500}" x2="${X + 0.500}" y1="${yHi}" y2="${yLo}" stroke="${col}"/>`;
      if (k === "r") out += `<rect x="${X - 3}" y="${yTop}" width="7" height="${yBot - yTop}" fill="#000" stroke="${col}" stroke-width="1.300"/>`;
      else out += `<rect x="${X - 3.500}" y="${yTop}" width="8" height="${Math.max(yBot - yTop, 1.500)}" fill="${col}"/>`;
    };
    c8.split("|").forEach(r => candle(z8, r));
    c9.split("|").forEach(r => candle(z9, r));
    out += `</g>`;
    // blue square markers
    [[286,435,14,14],[1015,215,14,16],[907,488,14,13]].forEach(r => { out += `<rect x="${r[0]}" y="${r[1]}" width="${r[2]}" height="${r[3]}" fill="#0000f0"/>`; });

    // peak note
    line([[987,96],[990,101],[1004,104]], "#b0b0b0", 1);
    out += `<text x="1008" y="112" font-size="17" fill="#b8b8b8">9.27</text>`;

    // signal labels, coordinates in the 1568-wide reference
    const S = 2160 / 1568;
    const tag = (t, x, y, color) => { out += `<text x="${x * S}" y="${y * S + 7}" text-anchor="middle" font-size="18" fill="${color}">${t}</text>`; };
    [[207,261],[744,105],[658,317]].forEach(p => tag("减仓", p[0], p[1], "#5a8ee8"));
    [[207,275],[589,375]].forEach(p => tag("★卖", p[0], p[1], "#00ff00"));
    [[85,429],[311,413],[893,225],[805,315]].forEach(p => tag("★买", p[0], p[1], "#ff1010"));
    [[90,447],[135,428],[153,417],[874,256],[1142,269]].forEach(p => tag("★加仓", p[0], p[1], "#ff60c0"));
    [[294,434],[415,442],[805,330],[988,351]].forEach(p => tag("反弹", p[0], p[1], "#ff1010"));
    tag("★加仓", 815, 334, "#ff60c0");
    tag("顶卖", 710, 147, "#e8e800");
    tag("三平底", 1108, 287, "#e8e800");
    [[283,448],[403,457],[794,343],[976,365]].forEach(p => {
      out += `<path transform="translate(${p[0] * S} ${p[1] * S})" d="M-6 -11 L-3 -11 L-1 -2 L5 0 C8 1 9 4 8 7 L6 11 L-2 11 C-5 8 -8 3 -9 0 L-7 -1 L-5 1 Z" fill="#f8c878" stroke="#b06020" stroke-width="0.500"/>`;
    });
    // red arrow under the bottom
    out += `<path d="M1500 349 L1493 360 H1498.500 V372 H1501.500 V360 H1507 Z" fill="#ff1010"/>`;

    // panel 2
    [721, 781, 842, 902, 964].forEach(grid);
    [[721,"1.00"],[781,"0.80"],[902,"0.40"],[964,"0.20"]].forEach(r => label(r[0], r[1]));
    [1178, 1428, 1572].forEach(x => {
      out += `<path d="M${x - 13} 1023 L${x - 3} 752 H${x + 3} L${x + 13} 1023" fill="none" stroke="#d8d8d8" stroke-width="1.500"/>`;
      out += `<path d="M${x - 9} 1023 L${x} 760 L${x + 9} 1023" fill="none" stroke="#707070"/>`;
    });
    out += `<rect x="3" y="1021.500" width="1665" height="3" fill="#f0f000"/>`;
    out += `<rect x="1712" y="838" width="75" height="20" fill="#000080"/><text x="1716" y="854" font-size="16" fill="#d8d8d8">0.54</text>`;

    // panel 3
    [1064, 1114, 1163].forEach(grid);
    out += `<line x1="1668" x2="1711" y1="1213" y2="1213" stroke="#a00000" stroke-dasharray="2 5"/>`;
    [[1064,"45000"],[1114,"30000"],[1163,"15000"],[1213,"0"]].forEach(r => label(r[0], r[1]));
    [1089, 1138, 1188, 1238].forEach(tick);
    out += `<rect x="0" y="1212" width="1668" height="2" fill="#909090"/>`;
    const azA = pts(z10,[8,532,25,535,42,555,65,562,80,585,110,555,125,548,160,540,178,558,195,535,238,540,250,560,272,585,290,530,310,545,328,548,347,603,403,485,422,540,442,545,460,577,478,532,498,532,517,493,535,520,553,510,572,572,590,572,610,590,648,512,668,512,722,578,750,570,780,552,820,550,830,563,855,568,870,553,895,555,910,565,930,555,955,535,975,538,1003,565,1030,552,1050,542,1125,542,1135,563,1155,535,1173,535,1190,510,1210,535,1230,540,1248,562,1268,545,1285,545,1305,530,1320,535,1343,555,1360,530,1378,497,1395,512,1410,508,1433,568,1450,530,1472,530,1490,445,1508,645,1528,470,1546,745,1566,415]);
    const azB = pts(z11,[192,698,212,577,233,635,275,558,297,700,316,717,337,620,360,403,382,403,400,417,422,640,443,490,464,605,485,385,505,572,527,448,547,420,568,90,590,290,610,480,632,675,652,628,670,525,692,640,712,498,752,505,778,542,795,537,815,505,838,505,880,540,900,617,920,520,943,325,983,405,1005,645,1025,517,1045,522,1068,495,1090,585,1110,717,1130,600,1150,595,1172,430,1192,535,1213,540,1235,680,1256,680,1280,700,1298,707,1318,620,1338,502]);
    line(azA.concat(azB), "#e01010", 1.700);
    line(pts(z10,[8,516,25,522,42,535,65,535,80,548,100,540,118,530,145,530,155,525,178,535,195,525,238,525,250,535,270,548,290,508,328,508,347,548,365,525,403,485,422,507,442,510,460,532,478,517,498,517,517,493,535,510,553,493,572,520,590,520,610,540,630,525,648,512,668,512,685,525,715,546]), "#e8e800", 1.800);
    line(pts(z10,[762,548,772,540,820,540,830,548,860,548,865,544,915,544,945,525,965,525,985,535,1005,548,1020,540,1050,540,1050,534,1125,534,1135,540,1155,525,1173,520,1190,507,1210,525,1230,525,1248,540,1268,535,1285,530,1300,530,1320,540,1340,548,1360,525,1378,490,1410,485,1433,532,1450,518,1472,510,1490,443,1508,462,1528,290,1546,360,1566,205]).concat(pts(z11,[192,395,212,395,233,455,275,455,297,548])), "#e8e800", 1.800);
    line(pts(z11,[316,548,337,475,360,338,382,338,400,355,420,487,443,403,464,468,485,332,505,415,527,340,547,315,568,105,590,165,610,290,632,495,652,495,670,458,692,515,712,440,752,445,778,482,790,477,838,477,855,490,880,490,900,522,920,430,943,278,963,278,983,328,1005,478,1025,432,1045,435,1068,435,1090,485,1110,548,1130,490,1150,490,1172,392,1192,445,1213,445,1235,548]), "#e8e800", 1.800);
    line(pts(z11,[1300,548,1318,507,1338,452]), "#e8e800", 1.800);
    out += `<rect x="1711" y="1260" width="39" height="22" fill="#000" stroke="#a00000"/><text x="1730" y="1277" text-anchor="middle" font-size="17" fill="#c83030">X10</text>`;

    // date axis
    out += `<line x1="1711" x2="1711" y1="1282" y2="1306" stroke="#a00000"/>`;
    [184, 423, 614, 877, 1152, 1379, 1571].forEach(x => { out += `<line x1="${x}" x2="${x}" y1="1282" y2="1305" stroke="#a00000"/>`; });
    [244, 304, 364, 520, 566, 810, 945, 1084, 1209, 1322, 1475].forEach(x => { out += `<line x1="${x}" x2="${x}" y1="1282" y2="1286" stroke="#a00000"/>`; });
    [[5,"2021年"],[186,"9"],[426,"10"],[617,"11"],[879,"12"],[1155,"1"],[1382,"2"],[1574,"3"]].forEach(r => { out += `<text x="${r[0]}" y="1301" font-size="18" fill="#d82020">${r[1]}</text>`; });
    out += `<rect x="636" y="1283" width="118" height="22" fill="#0000a0"/><text x="638" y="1301" font-size="17" fill="#d8d8d8">2021/11/03/三</text>`;
    out += `<text x="1747" y="1302" text-anchor="middle" font-size="18" fill="#c0c0c0">日线</text>`;

    const svg = document.getElementById("chart");
    svg.innerHTML = `<defs><clipPath id="main"><rect x="0" y="68" width="1711" height="576"/></clipPath></defs>` + out;
  </script>
</body>
</html>
